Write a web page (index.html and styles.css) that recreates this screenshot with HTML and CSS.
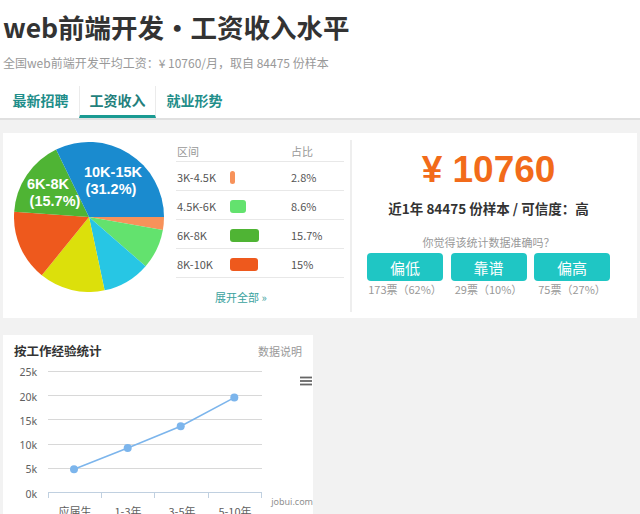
FILE: index.html
```html
<!DOCTYPE html>
<html lang="zh-CN">
<head>
<meta charset="utf-8">
<title>web前端开发・工资收入水平</title>
<link rel="stylesheet" href="styles.css">
</head>
<body>
<header class="page-head">
  <h1 class="title">web前端开发・工资收入水平</h1>
  <p class="subtitle">全国web前端开发平均工资：¥ 10760/月，取自 84475 份样本</p>
  <nav class="tabs">
    <a class="tab">最新招聘</a>
    <a class="tab active">工资收入</a>
    <a class="tab">就业形势</a>
  </nav>
</header>

<main class="content">
  <section class="card salary">
    <div class="dist">
      <svg class="pie" width="150" height="150" viewBox="0 0 150 150">
        <path d="M75 75 L150 75 A75 75 0 0 1 148.86 88.02 Z" fill="#f7925a"/>
        <path d="M75 75 L148.86 88.02 A75 75 0 0 1 131.60 124.21 Z" fill="#63e26e"/>
        <path d="M75 75 L131.60 124.21 A75 75 0 0 1 90.59 148.36 Z" fill="#27c6e4"/>
        <path d="M75 75 L90.59 148.36 A75 75 0 0 1 27.80 133.28 Z" fill="#dce00b"/>
        <path d="M75 75 L27.80 133.28 A75 75 0 0 1 0.18 69.77 Z" fill="#ee591d"/>
        <path d="M75 75 L0.18 69.77 A75 75 0 0 1 42.12 7.59 Z" fill="#4fb434"/>
        <path d="M75 75 L42.12 7.59 A75 75 0 0 1 150 75 Z" fill="#1a8bcf"/>
        <g class="pie-label">
          <text x="99" y="35" text-anchor="middle">10K-15K</text>
          <text x="97" y="52" text-anchor="middle">(31.2%)</text>
          <text x="34" y="47" text-anchor="middle">6K-8K</text>
          <text x="41" y="64" text-anchor="middle">(15.7%)</text>
        </g>
      </svg>
      <div class="range-table">
        <div class="row head"><span class="c-range">区间</span><span class="c-bar"></span><span class="c-pct">占比</span></div>
        <div class="row"><span class="c-range">3K-4.5K</span><span class="c-bar"><i class="bar bar-orange" style="width:5px"></i></span><span class="c-pct">2.8%</span></div>
        <div class="row"><span class="c-range">4.5K-6K</span><span class="c-bar"><i class="bar bar-light" style="width:16px"></i></span><span class="c-pct">8.6%</span></div>
        <div class="row"><span class="c-range">6K-8K</span><span class="c-bar"><i class="bar bar-green" style="width:29px"></i></span><span class="c-pct">15.7%</span></div>
        <div class="row"><span class="c-range">8K-10K</span><span class="c-bar"><i class="bar bar-red" style="width:28px"></i></span><span class="c-pct">15%</span></div>
        <a class="more">展开全部 »</a>
      </div>
    </div>
    <div class="avg">
      <div class="amount">¥ 10760</div>
      <div class="meta">近1年 84475 份样本 / 可信度：高</div>
      <div class="ask">你觉得该统计数据准确吗？</div>
      <div class="votes">
        <div class="vote"><button class="vote-btn">偏低</button><span class="vote-count">173票（62%）</span></div>
        <div class="vote"><button class="vote-btn">靠谱</button><span class="vote-count">29票（10%）</span></div>
        <div class="vote"><button class="vote-btn">偏高</button><span class="vote-count">75票（27%）</span></div>
      </div>
    </div>
  </section>

  <section class="card exp">
    <div class="exp-head">
      <h2 class="exp-title">按工作经验统计</h2>
      <a class="exp-note">数据说明</a>
    </div>
    <svg class="line-chart" width="310" height="164" viewBox="0 0 310 164">
      <g class="grid">
        <line x1="45" y1="10.5" x2="259" y2="10.5"/>
        <line x1="45" y1="34.5" x2="259" y2="34.5"/>
        <line x1="45" y1="58.5" x2="259" y2="58.5"/>
        <line x1="45" y1="83.5" x2="259" y2="83.5"/>
        <line x1="45" y1="107.5" x2="259" y2="107.5"/>
      </g>
      <g class="axis">
        <line x1="45" y1="131.5" x2="259" y2="131.5"/>
        <line x1="45.5" y1="131.5" x2="45.5" y2="137"/>
        <line x1="98.5" y1="131.5" x2="98.5" y2="137"/>
        <line x1="151.5" y1="131.5" x2="151.5" y2="137"/>
        <line x1="205.5" y1="131.5" x2="205.5" y2="137"/>
        <line x1="258.5" y1="131.5" x2="258.5" y2="137"/>
      </g>
      <g class="ylabels">
        <text x="34" y="15">25k</text>
        <text x="34" y="39.5">20k</text>
        <text x="34" y="63.5">15k</text>
        <text x="34" y="88">10k</text>
        <text x="34" y="112">5k</text>
        <text x="34" y="136.5">0k</text>
      </g>
      <g class="xlabels">
        <text x="72" y="155">应届生</text>
        <text x="125" y="155">1-3年</text>
        <text x="179" y="155">3-5年</text>
        <text x="232" y="155">5-10年</text>
      </g>
      <polyline class="series" points="71,108.3 124.7,87 177.7,65.2 231.3,36.6"/>
      <g class="markers">
        <circle cx="71" cy="108.3" r="4"/>
        <circle cx="124.7" cy="87" r="4"/>
        <circle cx="177.7" cy="65.2" r="4"/>
        <circle cx="231.3" cy="36.6" r="4"/>
      </g>
      <g class="menu-icon">
        <line x1="297" y1="16.5" x2="309" y2="16.5"/>
        <line x1="297" y1="20" x2="309" y2="20"/>
        <line x1="297" y1="23.5" x2="309" y2="23.5"/>
      </g>
      <text class="credit" x="310" y="143.5">jobui.com</text>
    </svg>
  </section>
</main>
</body>
</html>
```

FILE: styles.css
```css
html, body {
  margin: 0;
  padding: 0;
}

body {
  background: #f2f2f2;
  font-family: "Noto Sans CJK SC", "Noto Sans", sans-serif;
  color: #333;
}

/* ---------- header ---------- */
.page-head {
  background: #fff;
  padding: 9px 0 0 3px;
  border-bottom: 2px solid #e0e0e0;
}

.title {
  margin: 0;
  font-size: 26.5px;
  line-height: 36px;
  font-weight: bold;
  color: #333;
}

.subtitle {
  margin: 8px 0 0;
  font-size: 12px;
  line-height: 20px;
  color: #999;
}

.tabs {
  display: flex;
  margin: 13px 0 0 -1px;
}

.tab {
  box-sizing: border-box;
  width: 77px;
  height: 32px;
  line-height: 29px;
  text-align: center;
  font-size: 14px;
  font-weight: bold;
  color: #1f8e8a;
  border-bottom: 3px solid transparent;
}

.tab.active {
  color: #237f7c;
  border-left: 1px solid #ebebeb;
  border-right: 1px solid #ebebeb;
  border-bottom-color: #1a9a92;
}

/* ---------- content ---------- */
.content {
  padding: 13px 3px 0;
}

.card {
  background: #fff;
}

.salary {
  display: flex;
  height: 185px;
}

.dist {
  display: flex;
  box-sizing: border-box;
  width: 347px;
  padding: 9px 0 0 11px;
}

.pie {
  flex: none;
  display: block;
}

.pie-label text {
  fill: #fff;
  font-family: "Liberation Sans", Arial, sans-serif;
  font-weight: bold;
  font-size: 14.5px;
}

.range-table {
  width: 168px;
  margin: -2px 0 0 12px;
  font-size: 11px;
  color: #555;
}

.row {
  display: flex;
  align-items: center;
  box-sizing: border-box;
  height: 29px;
  padding-top: 2px;
  border-bottom: 1px solid #e8e8e8;
}

.row.head {
  height: 22px;
  padding-top: 0;
  color: #999;
}

.c-range {
  width: 53px;
  padding-left: 1px;
}

.c-bar {
  width: 61px;
  display: flex;
  align-items: center;
}

.bar {
  display: block;
  height: 13px;
  border-radius: 3px;
}

.bar-orange { background: #f7925a; }
.bar-light { background: #63e26e; }
.bar-green { background: #4fb434; }
.bar-red { background: #ee591d; }

.more {
  display: block;
  margin: 11px 0 0 39px;
  line-height: 16px;
  color: #3aa29e;
}

/* ---------- average ---------- */
.avg {
  flex: 1;
  display: flex;
  flex-direction: column;
  align-items: center;
  margin: 7px 0 6px;
  padding: 10px 12px 0 0;
  border-left: 2px solid #eee;
}

.amount {
  font-family: "Liberation Sans", Arial, sans-serif;
  font-weight: bold;
  font-size: 37px;
  line-height: 40px;
  color: #f26b1a;
}

.meta {
  margin-top: 8px;
  font-size: 13.5px;
  line-height: 20px;
  font-weight: bold;
  color: #333;
}

.ask {
  margin-top: 16px;
  font-size: 11px;
  line-height: 16px;
  color: #999;
}

.votes {
  display: flex;
  gap: 7.5px;
  margin-top: 3px;
}

.vote {
  display: flex;
  flex-direction: column;
  align-items: center;
  width: 76px;
}

.vote-btn {
  width: 76px;
  height: 28px;
  border: none;
  border-radius: 4px;
  background: #1fc6c4;
  color: #fff;
  font-family: inherit;
  font-size: 15px;
  padding: 0;
}

.vote-count {
  margin-top: 1px;
  font-size: 11px;
  line-height: 14px;
  color: #999;
  white-space: nowrap;
}

/* ---------- experience chart ---------- */
.exp {
  width: 310px;
  height: 200px;
  margin-top: 17px;
}

.exp-head {
  display: flex;
  justify-content: space-between;
  align-items: center;
  padding: 6px 11px 0;
  height: 20px;
}

.exp-title {
  margin: 0;
  font-size: 12.5px;
  line-height: 20px;
  font-weight: bold;
  color: #333;
}

.exp-note {
  font-size: 11px;
  color: #999;
}

.line-chart {
  display: block;
}

.grid line {
  stroke: #d8d8d8;
  stroke-width: 1;
}

.axis line {
  stroke: #c0d0e0;
  stroke-width: 1;
}

.ylabels text {
  font-family: "Noto Sans", sans-serif;
  font-size: 10.5px;
  fill: #606060;
  text-anchor: end;
}

.xlabels text {
  font-family: "Noto Sans CJK SC", sans-serif;
  font-size: 11px;
  fill: #606060;
  text-anchor: middle;
}

.series {
  fill: none;
  stroke: #7cb5ec;
  stroke-width: 1.6;
}

.markers circle {
  fill: #7cb5ec;
}

.menu-icon line {
  stroke: #666;
  stroke-width: 1.8;
}

.credit {
  font-family: "Noto Sans", sans-serif;
  font-size: 9px;
  fill: #909090;
  text-anchor: end;
}
```
